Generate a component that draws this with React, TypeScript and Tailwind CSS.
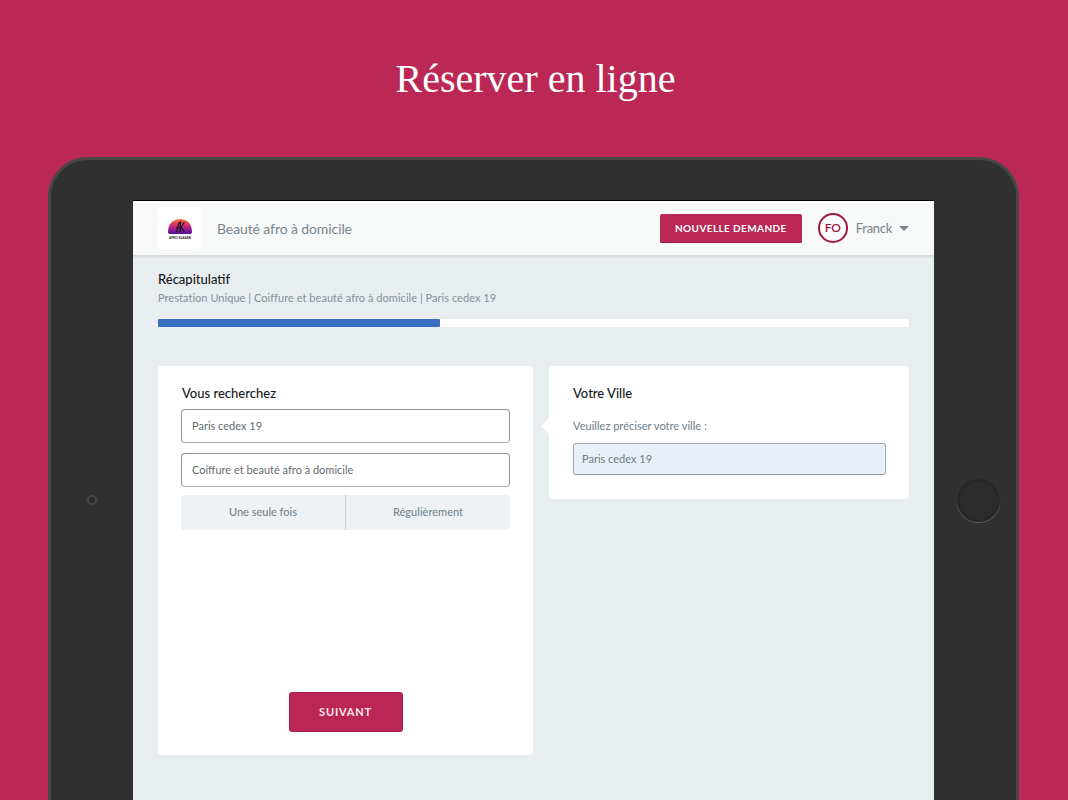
const lato = "font-['Lato','Noto_Sans',sans-serif]";

function Logo() {
  return (
    <div className="flex h-[43px] w-[43px] items-center justify-center rounded-[2px] bg-white">
      <svg width="28" height="26" viewBox="0 0 28 26">
        <defs>
          <linearGradient id="sun" x1="0" y1="0" x2="0" y2="1">
            <stop offset="0" stopColor="#f47a3a" />
            <stop offset="0.4" stopColor="#d8306a" />
            <stop offset="0.75" stopColor="#8a1a9a" />
            <stop offset="1" stopColor="#4a1590" />
          </linearGradient>
        </defs>
        <path d="M2 17 C2 9 7 4 14 4 C21 4 26 9 26 17 C26 18.5 25 19 24 19 L4 19 C3 19 2 18.5 2 17 Z" fill="url(#sun)" />
        <path d="M10.5 17 L13 8 L14.5 7 L14 17 M15 12 L18.5 7 M15 12 L18.5 17 M10 13 L15 13" stroke="#1a1020" strokeWidth="1.2" fill="none" />
        <text x="14" y="23.5" textAnchor="middle" fontSize="3.2" fontWeight="900" fill="#222" fontFamily="Lato, sans-serif">
          AFRO KLASAN
        </text>
      </svg>
    </div>
  );
}

function Header() {
  return (
    <header className="flex h-[56px] shrink-0 items-center border-y border-t-black border-b-[#d5d9db] bg-[#f8f9f9] pl-[25px] pr-[25px] shadow-[0_1px_2px_rgba(0,0,0,0.08)]">
      <Logo />
      <span className="ml-[16px] text-[14px] tracking-[-0.1px] text-[#76858e]">Beauté afro à domicile</span>
      <button
        type="button"
        className="ml-auto h-[29px] w-[142px] rounded-[2px] bg-[#ba2755] text-[10px] font-bold tracking-[0.4px] text-white shadow-[inset_0_-1px_0_#9c1c46]"
      >
        NOUVELLE DEMANDE
      </button>
      <div className="ml-[16px] flex h-[30px] w-[30px] items-center justify-center rounded-full border-2 border-[#a11545] bg-white text-[12px] font-semibold text-[#a11545]">
        FO
      </div>
      <span className="ml-[8px] mt-[1px] text-[13px] tracking-[-0.3px] text-[#76858e]">Franck</span>
      <span className="ml-[7px] mt-[1px] h-0 w-0 border-x-[5px] border-t-[5px] border-x-transparent border-t-[#76858e]" />
    </header>
  );
}

function SearchField({ value }: { value: string }) {
  return (
    <div className="flex h-[34px] items-center rounded-[4px] border border-[#8b9599] border-b-[#a9b0b3] bg-white px-[10px] text-[11px] text-[#636b70]">
      {value}
    </div>
  );
}

function LeftCard() {
  return (
    <section className="flex h-[389px] w-[375px] flex-col rounded-[3px] bg-white px-[23px] pt-[19px]">
      <h2 className="pl-[1px] text-[13px] font-medium leading-[16px] text-[#15191c]">Vous recherchez</h2>
      <div className="mt-[8px] flex flex-col gap-[10px]">
        <SearchField value="Paris cedex 19" />
        <SearchField value="Coiffure et beauté afro à domicile" />
      </div>
      <div className="mt-[8px] flex h-[35px] rounded-[3px] bg-[#eff2f5] text-[11px] font-medium text-[#76858e]">
        <div className="flex w-[165px] items-center justify-center border-r border-[#c9d0d4]">Une seule fois</div>
        <div className="flex flex-1 items-center justify-center">Régulièrement</div>
      </div>
      <button
        type="button"
        className="mx-auto mt-[162px] h-[40px] w-[114px] rounded-[3px] border border-[#a11b49] bg-[#ba2755] text-[11px] font-bold tracking-[0.8px] text-[#fbe6ee]"
      >
        SUIVANT
      </button>
    </section>
  );
}

function RightCard() {
  return (
    <section className="relative h-[133px] w-[360px] rounded-[3px] bg-white px-[24px] pt-[19px]">
      <span className="absolute left-[-8px] top-[52px] h-0 w-0 border-y-[8px] border-r-[8px] border-y-transparent border-r-white" />
      <h2 className="text-[13px] font-medium leading-[16px] text-[#15191c]">Votre Ville</h2>
      <p className="mt-[18px] text-[11px] font-medium leading-[14px] text-[#76858e]">Veuillez préciser votre ville :</p>
      <div className="mt-[10px] flex h-[32px] w-[313px] items-center rounded-[3px] border border-[#a3afb7] border-b-[#8e9aa2] bg-[#e8eff8] px-[8px] text-[11px] text-[#6f7c85]">
        Paris cedex 19
      </div>
    </section>
  );
}

function Screen() {
  return (
    <main className="flex min-h-[610px] w-[801px] flex-col bg-[#e8edf0]">
      <Header />
      <div className="px-[25px] pt-[15px]">
        <h1 className="text-[13px] font-medium leading-[16px] text-[#15191c]">Récapitulatif</h1>
        <p className="mt-[4px] text-[11px] leading-[14px] tracking-[0.04px] text-[#84919a]">
          Prestation Unique | Coiffure et beauté afro à domicile | Paris cedex 19
        </p>
        <div className="mt-[14px] h-[8px] w-[751px] rounded-[1px] bg-white">
          <div className="h-full w-[282px] rounded-[1px] bg-[#3b71c0]" />
        </div>
        <div className="mt-[39px] flex items-start gap-[16px]">
          <LeftCard />
          <RightCard />
        </div>
      </div>
    </main>
  );
}

export default function App() {
  return (
    <div className={`${lato} flex h-[800px] w-[1068px] flex-col items-center overflow-hidden bg-[#bb2856]`}>
      <div className="flex h-[157px] w-full shrink-0 items-start justify-center pl-[3px] pt-[54px] font-['Liberation_Serif',serif] text-[40px] leading-[50px] text-white">
        Réserver en ligne
      </div>
      <div className="relative ml-[-1px] flex h-[700px] w-[971px] shrink-0 justify-center rounded-t-[40px] border-[3px] border-[#474747] bg-[#303030] pt-[40px]">
        <Screen />
        <span className="absolute left-[36px] top-[335px] h-[10px] w-[10px] rounded-full border-2 border-[#484848] bg-[#2a2a2a]" />
        <span className="absolute left-[906px] top-[319px] h-[43px] w-[43px] rounded-full border-2 border-[#262626] bg-[#2b2b2b] shadow-[0_1px_1px_rgba(255,255,255,0.25)]" />
      </div>
    </div>
  );
}
